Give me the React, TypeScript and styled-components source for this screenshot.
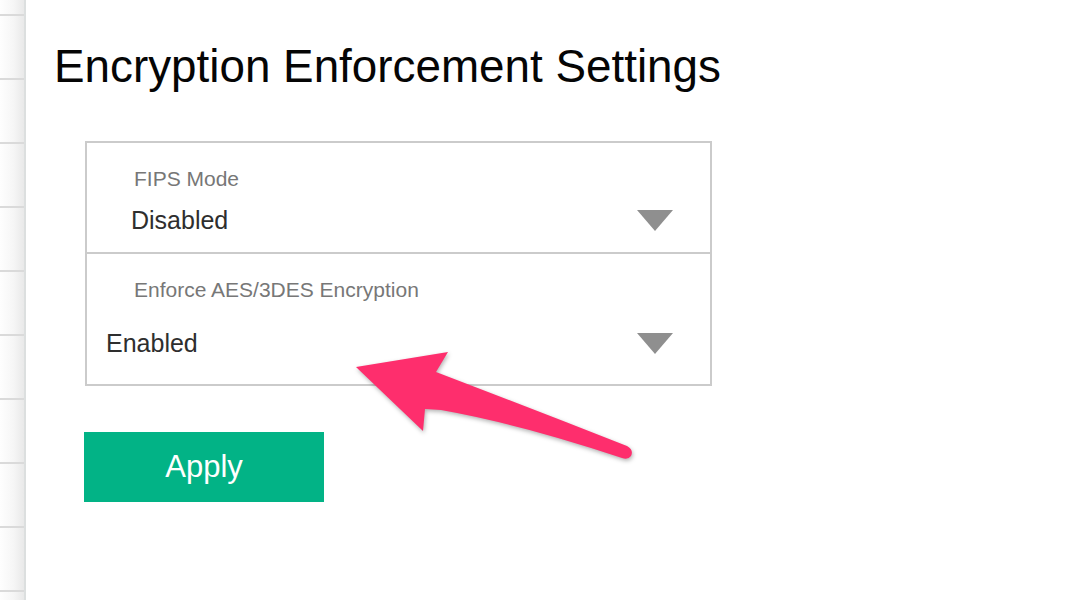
import React from 'react';
import styled, { createGlobalStyle } from 'styled-components';

const GlobalStyle = createGlobalStyle`
  html, body, #root {
    margin: 0;
    padding: 0;
    height: 100%;
    background: #fff;
  }
  body {
    overflow: hidden;
    font-family: 'Liberation Sans', Arial, sans-serif;
  }
`;

const Page = styled.div`
  position: relative;
  display: flex;
  width: 100%;
  height: 600px;
  background: #fff;
`;

const Sidebar = styled.div`
  flex: 0 0 24px;
  height: 100%;
  display: flex;
  flex-direction: column;
  background: linear-gradient(90deg, #fefefe 0%, #f6f6f6 55%, #e9e9e9 100%);
  border-right: 2px solid #dcdfdf;
  overflow: hidden;
`;

const SidebarCell = styled.div<{ $first?: boolean }>`
  flex: 0 0 ${({ $first }) => ($first ? 14 : 62)}px;
  border-bottom: 2px solid #dadada;
`;

const Main = styled.main`
  flex: 1;
  display: flex;
  flex-direction: column;
  align-items: flex-start;
  padding-top: 44px;
`;

const Title = styled.h1`
  margin: 0 0 0 28px;
  font-size: 45.8px;
  line-height: 46px;
  font-weight: 400;
  color: #050505;
`;

const SettingsBox = styled.div`
  margin: 51px 0 0 59px;
  width: 627px;
  box-sizing: border-box;
  border: 2px solid #cbcbcb;
`;

const Row = styled.div<{ $bottom: number; $divider?: boolean }>`
  padding: 25px 37px ${({ $bottom }) => $bottom}px 0;
  border-bottom: ${({ $divider }) => ($divider ? '2px solid #cbcbcb' : 'none')};
`;

const Label = styled.div`
  padding-left: 47px;
  font-size: 21px;
  line-height: 21px;
  color: #777;
`;

const ValueLine = styled.div<{ $gap: number }>`
  margin-top: ${({ $gap }) => $gap}px;
  display: flex;
  align-items: center;
  justify-content: space-between;
`;

const Value = styled.div<{ $indent: number }>`
  padding-left: ${({ $indent }) => $indent}px;
  font-size: 25px;
  line-height: 25px;
  color: #2e2e2e;
`;

const Caret = styled.span`
  width: 0;
  height: 0;
  border-left: 18px solid transparent;
  border-right: 18px solid transparent;
  border-top: 21px solid #8f8f8f;
  filter: blur(0.6px);
`;

const ApplyButton = styled.button`
  margin: 46px 0 0 58px;
  width: 240px;
  height: 70px;
  border: none;
  background: #02b386;
  color: #fff;
  font-family: 'Liberation Sans', Arial, sans-serif;
  font-size: 31px;
  display: flex;
  align-items: center;
  justify-content: center;
  padding: 0;
  cursor: pointer;
`;

const ArrowLayer = styled.svg`
  position: absolute;
  left: 0;
  top: 0;
  width: 1086px;
  height: 600px;
  pointer-events: none;
  filter: drop-shadow(1px 2px 2px rgba(0, 0, 0, 0.3));
`;

const settings = [
  { label: 'FIPS Mode', value: 'Disabled', indent: 44, gap: 19, bottom: 19 },
  { label: 'Enforce AES/3DES Encryption', value: 'Enabled', indent: 19, gap: 31, bottom: 28 },
];

export default function App() {
  return (
    <>
      <GlobalStyle />
      <Page>
        <Sidebar>
          <SidebarCell $first />
          {Array.from({ length: 10 }).map((_, i) => (
            <SidebarCell key={i} />
          ))}
        </Sidebar>
        <Main>
          <Title>Encryption Enforcement Settings</Title>
          <SettingsBox>
            {settings.map((s, i) => (
              <Row key={s.label} $bottom={s.bottom} $divider={i < settings.length - 1}>
                <Label>{s.label}</Label>
                <ValueLine $gap={s.gap}>
                  <Value $indent={s.indent}>{s.value}</Value>
                  <Caret />
                </ValueLine>
              </Row>
            ))}
          </SettingsBox>
          <ApplyButton>Apply</ApplyButton>
        </Main>
        <ArrowLayer viewBox="0 0 1086 600">
          <path
            d="M356 367 L448 352 L436 372 Q530 408 627 446 Q634 450 631 456 Q628 460 622 458 Q520 424 441 410 L425 409 L423 431 Z"
            fill="#fe2e6d"
          />
        </ArrowLayer>
      </Page>
    </>
  );
}
